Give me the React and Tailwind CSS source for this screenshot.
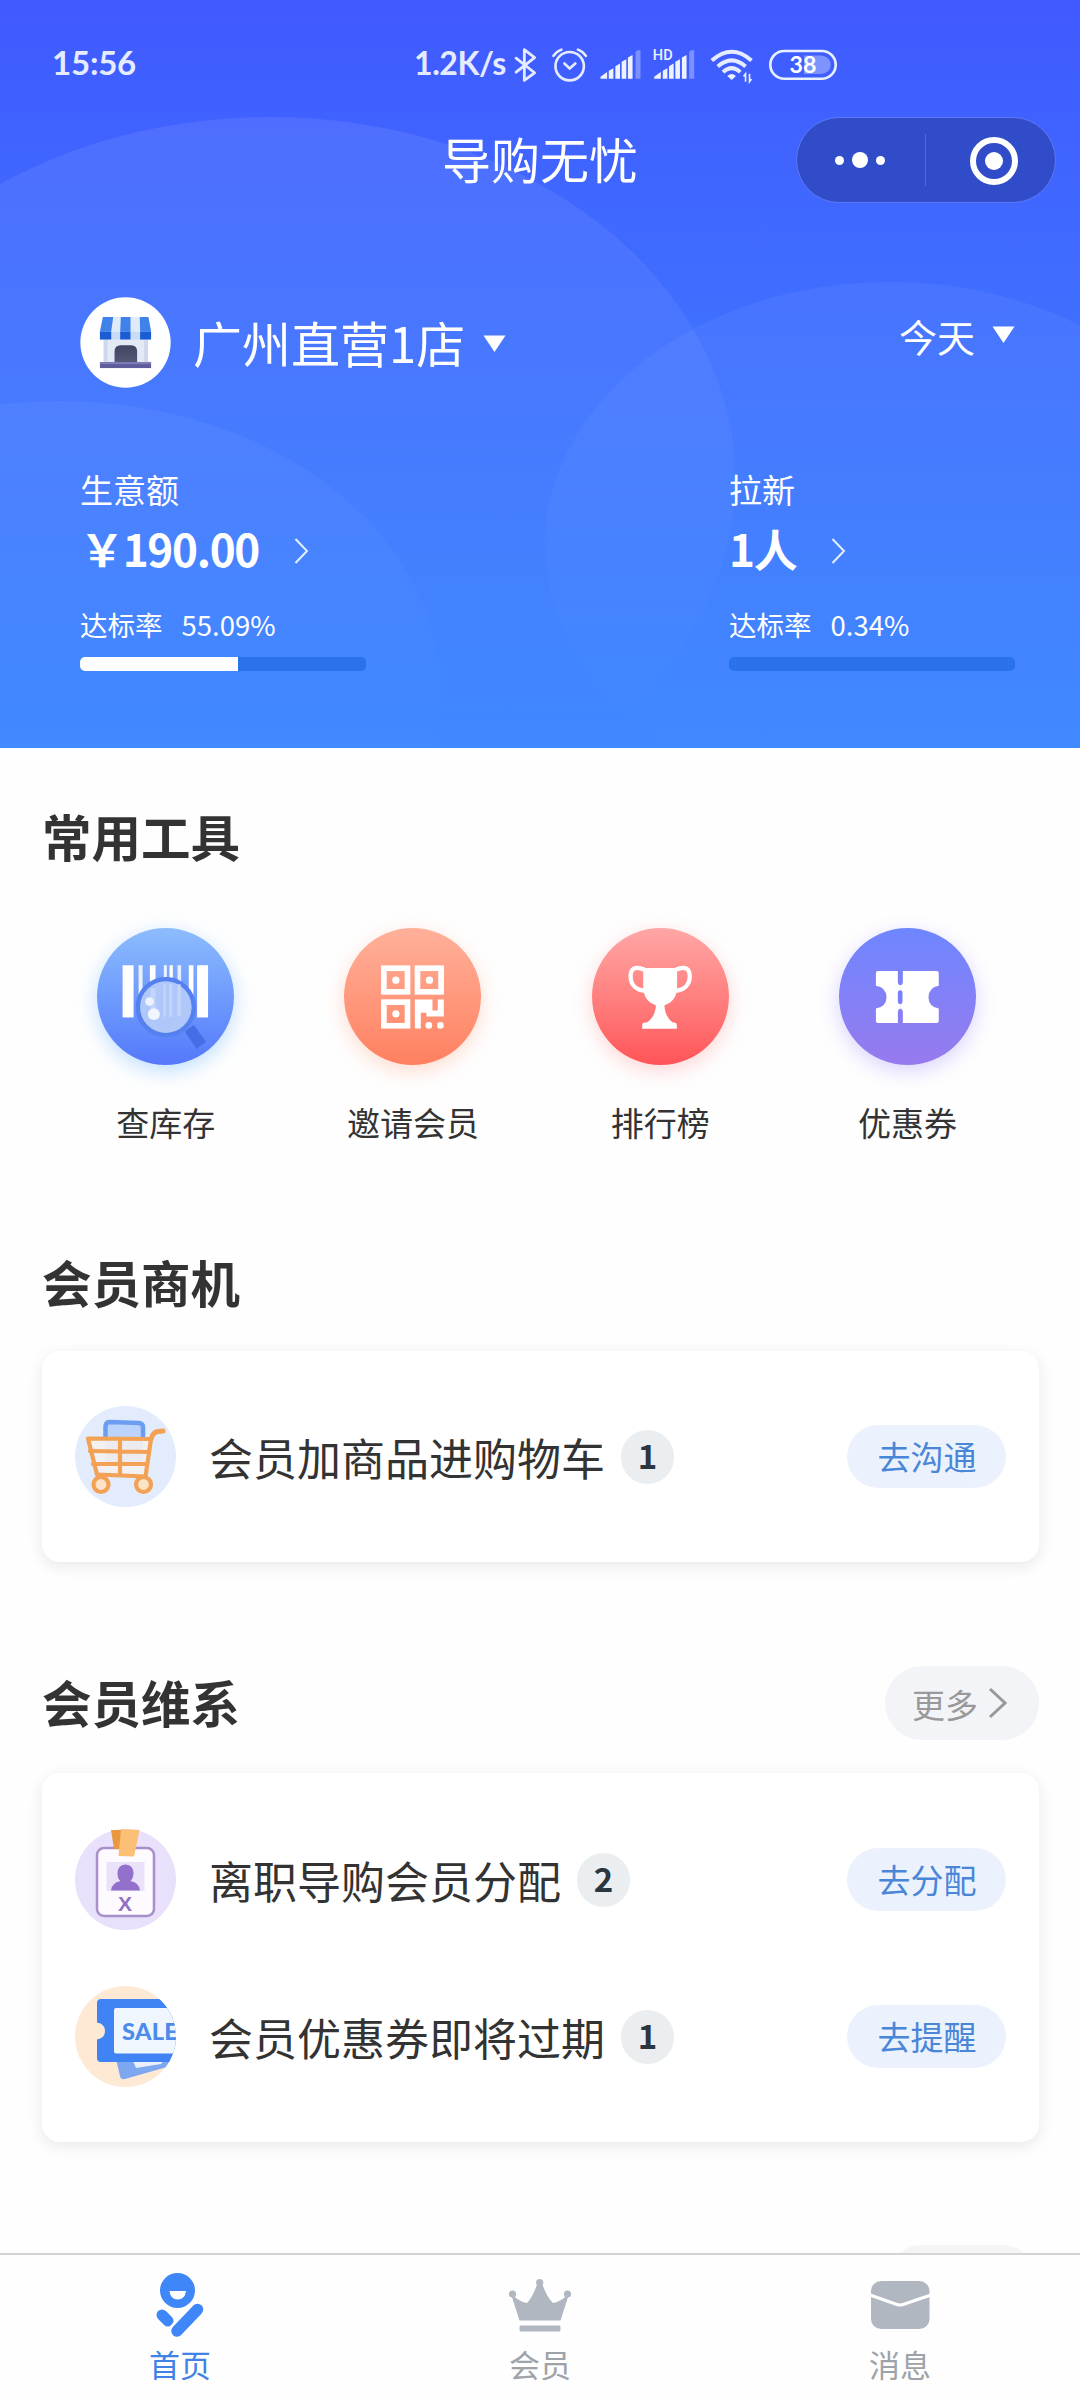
import clsx from 'clsx';

/* ---------- status bar icons ---------- */

function StatusIcons() {
  return (
    <div className="flex items-center">
      <svg className="ml-[7px] h-[38px] w-[25px]" viewBox="340 45 75 115" fill="none" stroke="#e6ecff" strokeWidth="8.5" strokeLinejoin="round" strokeLinecap="round">
        <path d="M349 82 L405 126 L374 149 V56 L405 80 L349 124" />
      </svg>
      <svg className="ml-3 h-[38px] w-[40px]" viewBox="450 45 120 115" fill="none" stroke="#e6ecff" strokeWidth="8" strokeLinecap="round">
        <circle cx="509" cy="106" r="43" />
        <path d="M493 98 L509 113 L526 98" />
        <path d="M460 75 Q468 62 484 56 M534 56 Q550 62 558 75" />
      </svg>
      <svg className="ml-2 h-[38px] w-[45px]" viewBox="595 45 135 115" fill="#eef2ff">
        <path d="M602 144 V138 L622 124 V144Z" />
        <path d="M627 144 V120 L641 112 V144Z" />
        <path d="M647 144 V106 L661 98 V144Z" />
        <path d="M666 144 V93 L680 85 V144Z" />
        <path d="M685 144 V80 L699 72 V144Z" />
        <path d="M708 144 V64 Q709 58 716 58 H723 V144Z" opacity="0.35" />
      </svg>
      <svg className="ml-2 h-[38px] w-[47px]" viewBox="755 45 141 115" fill="#eef2ff">
        <text x="760" y="86" fontSize="44" fontFamily="Roboto, sans-serif" fontWeight="500">HD</text>
        <path d="M764 144 V138 L784 124 V144Z" />
        <path d="M790 144 V120 L804 112 V144Z" />
        <path d="M809 144 V106 L823 98 V144Z" />
        <path d="M828 144 V93 L842 85 V144Z" />
        <path d="M848 144 V80 L862 72 V144Z" />
        <path d="M870 144 V64 Q871 58 878 58 H885 V144Z" opacity="0.35" />
      </svg>
      <svg className="ml-2.5 h-[38px] w-[47px]" viewBox="925 45 141 115" fill="none" stroke="#e6ecff" strokeWidth="12">
        <path d="M936 89 Q996 36 1056 89" />
        <path d="M954 107 Q996 70 1038 107" />
        <path d="M970 124 Q996 100 1022 124" />
        <path d="M983 136 Q996 124 1009 136 L996 148Z" fill="#eef2ff" stroke="none" />
        <path d="M1038 153 V129 L1032 137 M1050 129 V153 L1056 145" strokeWidth="5" />
      </svg>
      <svg className="ml-[13px] h-[38px] w-[70px]" viewBox="1104 45 210 115">
        <path d="M1212 74 H1262 Q1292 76 1293 102 Q1292 128 1262 130 H1212Z" fill="#7d94ff" />
        <rect x="1110" y="60" width="198" height="84" rx="42" fill="none" stroke="#e6f0ff" strokeWidth="8" />
        <text x="1209" y="127" textAnchor="middle" fontSize="70" fontFamily="Lato, sans-serif" fontWeight="700" fill="#fff">38</text>
      </svg>
    </div>
  );
}

/* ---------- header pieces ---------- */

function ShopIcon() {
  return (
    <svg className="h-[91px] w-[91px] shrink-0" viewBox="59 50 272 274">
      <defs>
        <linearGradient id="door" x1="0" y1="0" x2="0" y2="1">
          <stop offset="0" stopColor="#3f4462" />
          <stop offset="1" stopColor="#555a74" />
        </linearGradient>
      </defs>
      <circle cx="195" cy="187" r="136" fill="#fff" />
      <rect x="129" y="170" width="134" height="80" fill="#e4e9f6" />
      <rect x="129" y="176" width="12" height="72" fill="#d0d8ee" />
      <rect x="251" y="176" width="12" height="72" fill="#d0d8ee" />
      <path d="M127 110 H264 L272 154 H118Z" fill="#dfeafc" />
      <path d="M118 154 H272 V178 H118Z" fill="#c8dbf8" />
      <path d="M127 110 H158 L152 154 H118Z M181 110 H210 V154 H179Z M238 110 H264 L272 154 H239Z" fill="#3f82ea" />
      <path d="M118 154 H152 V178 H118Z M179 154 H210 V178 H179Z M239 154 H272 V178 H239Z" fill="#1a5cd4" />
      <path d="M162 250 V212 Q163 196 180 195 H212 Q229 196 230 212 V250Z" fill="url(#door)" />
      <rect x="118" y="246" width="154" height="18" fill="#5f5c9c" />
      <rect x="118" y="246" width="154" height="6" fill="#7f7cb8" />
    </svg>
  );
}

function Caret({ className }) {
  return (
    <svg className={clsx('h-[17px] w-[23px]', className)} viewBox="0 0 23 17" fill="#fff">
      <path d="M0.5 0.5 H22.5 L11.5 17Z" />
    </svg>
  );
}

function Stat({ label, value, rate, percent }) {
  return (
    <div className="w-[286px]">
      <div className="text-[33px] leading-[48px]">{label}</div>
      <div className="mt-[5px] flex h-[60px] items-center">
        <span className="text-[44px] leading-[60px] font-bold tracking-[-1.3px] whitespace-nowrap">{value}</span>
        <svg className="mt-1.5 ml-[35px] h-[26px] w-[15px]" viewBox="0 0 15 26" fill="none" stroke="#e3f0ff" strokeWidth="2">
          <path d="M1.5 1 L13 13 L1.5 25" />
        </svg>
      </div>
      <div className="mt-[26px] flex gap-[19px] text-[27.5px] leading-[40px]">
        <span>达标率</span>
        <span>{rate}</span>
      </div>
      <div className="mt-[13px] h-3.5 overflow-hidden rounded-[5px] bg-[#2a72ea]">
        <div className="h-full bg-white" style={{ width: `${percent}%` }}></div>
      </div>
    </div>
  );
}

function HeaderBackground() {
  return (
    <svg className="absolute inset-0 h-full w-full" viewBox="0 0 1080 748">
      <defs>
        <linearGradient id="bubble" x1="0" y1="0" x2="0" y2="1">
          <stop offset="0" stopColor="#fff" stopOpacity="0.08" />
          <stop offset="0.5" stopColor="#fff" stopOpacity="0.03" />
          <stop offset="0.85" stopColor="#fff" stopOpacity="0" />
        </linearGradient>
        <linearGradient id="bubbleSoft" x1="0" y1="0" x2="0" y2="1">
          <stop offset="0" stopColor="#fff" stopOpacity="0.05" />
          <stop offset="0.7" stopColor="#fff" stopOpacity="0.01" />
          <stop offset="1" stopColor="#fff" stopOpacity="0" />
        </linearGradient>
        <linearGradient id="bubbleLow" x1="0" y1="0" x2="0" y2="1">
          <stop offset="0" stopColor="#fff" stopOpacity="0.045" />
          <stop offset="0.5" stopColor="#fff" stopOpacity="0.008" />
          <stop offset="1" stopColor="#fff" stopOpacity="0" />
        </linearGradient>
      </defs>
      <ellipse cx="270" cy="479" rx="465" ry="362" fill="url(#bubble)" />
      <ellipse cx="890" cy="545" rx="345" ry="263" fill="url(#bubbleSoft)" />
      <ellipse cx="60" cy="690" rx="380" ry="289" fill="url(#bubbleLow)" />
    </svg>
  );
}

/* ---------- tool icons ---------- */

function BarcodeIcon() {
  return (
    <svg className="h-full w-full" viewBox="81 83 408 412">
      <g fill="#fff">
        <rect x="156" y="195" width="33" height="157" />
        <rect x="380" y="195" width="33" height="157" />
        <rect x="204" y="195" width="12" height="150" opacity="0.85" />
        <rect x="238" y="195" width="17" height="110" />
        <rect x="280" y="195" width="9" height="60" opacity="0.85" />
        <rect x="297" y="195" width="10" height="60" />
        <rect x="321" y="195" width="11" height="60" opacity="0.8" />
        <rect x="355" y="195" width="14" height="150" />
      </g>
      <path d="M343 394 L370 375 L407 425 L378 447Z" fill="#456de6" />
      <circle cx="286" cy="321" r="84" fill="#9cbcfc" stroke="#5581ef" strokeWidth="13" />
      <g fill="#d4e2ff" opacity="0.75">
        <rect x="240" y="265" width="15" height="80" />
        <rect x="279" y="252" width="7" height="98" />
        <rect x="296" y="252" width="9" height="98" />
        <rect x="321" y="252" width="10" height="95" />
      </g>
      <circle cx="286" cy="321" r="77" fill="#c3d2f6" opacity="0.5" />
      <circle cx="237" cy="304" r="13" fill="#eef3ff" />
      <circle cx="250" cy="342" r="18" fill="#f1f6ff" />
    </svg>
  );
}

function QrIcon() {
  return (
    <svg className="h-full w-full" viewBox="823 83 408 412">
      <g fill="none" stroke="#fff" strokeWidth="17">
        <rect x="941" y="204" width="71" height="71" />
        <rect x="1042" y="204" width="71" height="71" />
        <rect x="941" y="306" width="71" height="71" />
      </g>
      <g fill="#fff">
        <circle cx="977" cy="240" r="11" />
        <circle cx="1078" cy="240" r="11" />
        <circle cx="977" cy="341" r="11" />
        <path d="M1034 298 H1087 V331 H1103 V298 H1121 V349 H1069 V338 H1052 V385 H1034Z" />
        <circle cx="1076" cy="376" r="10" />
        <circle cx="1111" cy="376" r="10" />
      </g>
    </svg>
  );
}

function TrophyIcon() {
  return (
    <svg className="h-full w-full" viewBox="97 83 408 412">
      <g fill="none" stroke="#fff" strokeWidth="13">
        <path d="M252 208 C224 196 211 206 211 228 C211 252 226 270 256 272" />
        <path d="M348 208 C376 196 389 206 389 228 C389 252 374 270 344 272" />
      </g>
      <path
        d="M249 203 H351 V262 Q349 304 313 315 Q314 350 338 367 H344 Q350 368 350 374 V386 H246 V374 Q246 368 252 367 H260 Q286 350 287 315 Q251 304 249 262Z"
        fill="#fff"
      />
    </svg>
  );
}

function CouponIcon() {
  return (
    <svg className="h-full w-full" viewBox="839 83 408 412">
      <g fill="#fff">
        <path d="M954 212 H1014 V246 Q1015 255 1022 255 V325 Q1015 326 1014 334 V369 H954 Q948 369 948 363 V325 Q979 320 980 291 Q979 262 948 257 V218 Q948 212 954 212Z" />
        <path d="M1029 212 H1131 Q1137 212 1137 218 V257 Q1107 262 1106 291 Q1107 320 1137 325 V363 Q1137 369 1131 369 H1029 V334 Q1028 326 1021 325 V255 Q1028 255 1029 246Z" />
      </g>
      <rect x="1014" y="270" width="14" height="42" rx="7" fill="#7a80fb" />
    </svg>
  );
}

const tools = [
  { name: '查库存', icon: <BarcodeIcon />, bg: 'from-[#8dbcfd] to-[#5578fb] shadow-[0_6px_20px_rgba(90,170,255,0.38)]' },
  { name: '邀请会员', icon: <QrIcon />, bg: 'from-[#ffb09a] to-[#ff8060] shadow-[0_6px_20px_rgba(255,150,110,0.32)]' },
  { name: '排行榜', icon: <TrophyIcon />, bg: 'from-[#ffa6a6] to-[#ff5358] shadow-[0_6px_20px_rgba(255,110,110,0.28)]' },
  { name: '优惠券', icon: <CouponIcon />, bg: 'from-[#6d86ff] to-[#967aee] shadow-[0_6px_20px_rgba(140,120,255,0.32)]' },
];

/* ---------- list icons ---------- */

function CartIcon() {
  return (
    <svg className="h-[101px] w-[101px]" viewBox="0 0 101 101">
      <circle cx="50.5" cy="50.5" r="50.5" fill="#e3ecfd" />
      <path d="M30.5 60 V20 Q31 16 35 16 L64 17 Q68 17.5 68 21 V60Z" fill="#d3e0fb" />
      <path d="M30.5 33 V20 Q31 16 35 16 L64 17 Q68 17.5 68 21 V33" fill="#bcd4fb" stroke="#6d9df0" strokeWidth="4.5" />
      <path d="M14 33 H76 L70 69 H22Z" fill="#fdf3ea" opacity="0.6" />
      <g fill="none" stroke="#f2a155" strokeWidth="4.2" strokeLinecap="round" strokeLinejoin="round">
        <path d="M13 32.5 L76 33 L70.5 70.5 L22 68.5Z" />
        <path d="M15 45 L74 46 M18 58 L72 58 M45 33 V69" />
        <path d="M76 33 Q78 26 83 25.5 L88 25" strokeWidth="5" />
        <circle cx="26" cy="78.5" r="7.5" fill="#fde3c6" />
        <circle cx="68.5" cy="78.5" r="7.5" fill="#fde3c6" />
      </g>
    </svg>
  );
}

function BadgeIcon() {
  return (
    <svg className="h-[101px] w-[101px]" viewBox="0 0 101 101">
      <circle cx="50.5" cy="50.5" r="50.5" fill="#e9e0fb" />
      <rect x="22" y="19" width="57" height="68" rx="7" fill="#fdfbff" stroke="#a88fcc" strokeWidth="2.5" />
      <path d="M36 1 H47 L46 20 H39Z" fill="#e9983f" />
      <path d="M46 0 L64.5 1 L59 27.5 L43.5 27Z" fill="#fbbf76" />
      <rect x="31.5" y="33" width="38" height="29" fill="#e9e2f8" />
      <path d="M50.5 35.5 Q58.5 36 58.5 44.5 Q58 50 55.5 52 Q64.5 54 65 61.5 H36 Q36.5 54 45.5 52 Q42.5 50 42.5 44.5 Q42.5 36 50.5 35.5Z" fill="#9270cc" />
      <text x="50" y="81.5" textAnchor="middle" fontSize="21" fontFamily="Liberation Sans, sans-serif" fontWeight="700" fill="#9270c4">X</text>
    </svg>
  );
}

function SaleIcon() {
  return (
    <svg className="h-[101px] w-[101px]" viewBox="0 0 101 101">
      <defs>
        <clipPath id="saleRound">
          <circle cx="50.5" cy="50.5" r="50.5" />
        </clipPath>
      </defs>
      <g clipPath="url(#saleRound)">
        <rect width="101" height="101" fill="#fee9d5" />
        <path d="M41 73 H96 L92 81 L50 93 Q46 94 45 90Z" fill="#7da7ef" />
        <path d="M57 73 H90 L86 78 L61 82Z" fill="#e8f0fd" />
        <path d="M26 13 H101 V76 H26 Q22 76 22 72 V53.5 Q30 52 30 45 Q30 38 22 36.5 V17 Q22 13 26 13Z" fill="#4083f4" />
        <path d="M41 22 H101 V67.5 H41 Q39 67.5 39 65.5 V24 Q39 22 41 22Z" fill="#eff6fe" />
        <text x="47" y="53.5" fontSize="23.5" letterSpacing="0.3" fontFamily="Lato, sans-serif" fontWeight="900" fill="#4c8bea">SALE</text>
      </g>
    </svg>
  );
}

/* ---------- shared blocks ---------- */

function TaskRow({ icon, title, count, action, className }) {
  return (
    <div className={clsx('flex items-center px-[33px]', className)}>
      {icon}
      <span className="ml-[33px] text-[44px] leading-[60px] text-[#333]">{title}</span>
      <span className="ml-4 flex h-[54px] w-[53px] items-center justify-center rounded-full bg-[#eaeef0] pb-0.5 text-[33px] font-bold text-[#2c3640]">
        {count}
      </span>
      <button className="ml-auto h-[63px] w-[159px] rounded-full bg-[#ebf2fd] pl-px text-[33px] leading-[63px] text-[#4a86d8]">
        {action}
      </button>
    </div>
  );
}

function MorePill() {
  return (
    <div className="flex h-[74px] w-[154px] items-center rounded-full bg-[#f3f4f7] pl-[27px] text-[33px] text-[#999]">
      <span className="pt-1">更多</span>
      <svg className="ml-2.5 h-[32px] w-[19px]" viewBox="0 0 19 32" fill="none" stroke="#999" strokeWidth="3">
        <path d="M2 2 L17 16 L2 30" />
      </svg>
    </div>
  );
}

const cardClass = 'rounded-[18px] bg-white shadow-[0_4px_16px_rgba(0,0,0,0.09)]';
const headingClass = 'text-[49.5px] leading-[50px] font-bold text-[#333]';

/* ---------- bottom tabs ---------- */

function HomeTab() {
  return (
    <svg className="h-[70px] w-[60px]" viewBox="150 2270 60 70">
      <circle cx="177.5" cy="2290.5" r="17.5" fill="#3f86f8" />
      <path d="M169.5 2291 H186 Q185 2299.5 177.7 2299.5 Q170.5 2299.5 169.5 2291Z" fill="#fff" />
      <path d="M162 2315 L168 2321" stroke="#3f86f8" strokeWidth="11" strokeLinecap="round" />
      <path d="M197.500 2309.500 L177 2331" stroke="#fff" strokeWidth="17" strokeLinecap="round" />
      <path d="M197.5 2309.5 L177 2331" stroke="#3f86f8" strokeWidth="11.5" strokeLinecap="round" />
    </svg>
  );
}

function MemberTab() {
  return (
    <svg className="h-[70px] w-[70px]" viewBox="505 2270 70 70" fill="#b0b7c0">
      <circle cx="512.5" cy="2294" r="3.6" />
      <circle cx="539.7" cy="2282.5" r="3.6" />
      <circle cx="567.5" cy="2294" r="3.6" />
      <path d="M511 2294 Q519 2301.500 527 2303 Q533 2297 537.5 2283 H542 Q546.500 2297 553 2303 Q561 2301.500 569 2294 L560.5 2320.5 H519.5Z" />
      <rect x="519.5" y="2325.5" width="41" height="6" rx="1.5" />
    </svg>
  );
}

function MessageTab() {
  return (
    <svg className="h-[70px] w-[70px]" viewBox="865 2270 70 70">
      <rect x="871" y="2281" width="58.5" height="48" rx="10" fill="#b0b7c0" />
      <path d="M870 2295 L897 2304.5 Q900 2305.5 903 2304.5 L931 2295" fill="none" stroke="#fff" strokeWidth="3.2" />
    </svg>
  );
}

const tabs = [
  { name: '首页', icon: <HomeTab />, color: 'text-[#4182e6]' },
  { name: '会员', icon: <MemberTab />, color: 'text-[#9da3a9]' },
  { name: '消息', icon: <MessageTab />, color: 'text-[#9da3a9]' },
];

function App() {
  return (
    <div className="flex h-[2400px] w-[1080px] flex-col overflow-hidden bg-[#fefefe] font-['Noto_Sans_CJK_SC',sans-serif]">
      {/* Header */}
      <header className="relative h-[748px] shrink-0 bg-gradient-to-b from-[#4059ff] to-[#4089ff] text-white">
        <HeaderBackground />
        <div className="relative">
          {/* Status bar */}
          <div className="flex h-[117px] items-center pt-[13px] pl-[52px] font-['Lato',sans-serif] font-bold text-[#e6ecff]">
            <span className="w-[362px] pb-1 text-[33px] tracking-[-0.2px]">15:56</span>
            <span className="w-[92px] pb-1 text-[32px] tracking-[-0.4px] whitespace-nowrap">1.2K/s</span>
            <StatusIcons />
          </div>

          {/* Title bar */}
          <div className="grid h-[85px] grid-cols-[1fr_auto_1fr] items-center px-6">
            <div></div>
            <h1 className="pb-[5px] text-[49px] leading-[60px]">导购无忧</h1>
            <div className="flex h-[86px] w-[260px] items-center justify-self-end rounded-full border border-[#5d78f4] bg-[#314cc9]">
              <div className="flex w-[128px] items-center justify-center gap-2 pr-0.5">
                <span className="h-[9px] w-[9px] rounded-full bg-white"></span>
                <span className="h-4 w-4 rounded-full bg-white"></span>
                <span className="h-[9px] w-[9px] rounded-full bg-white"></span>
              </div>
              <div className="h-[52px] w-px bg-[#5068d8]"></div>
              <div className="flex flex-1 items-center justify-center pt-0.5 pl-1.5">
                <div className="flex h-12 w-12 items-center justify-center rounded-full border-[6px] border-white">
                  <span className="h-[18px] w-[18px] rounded-full bg-white"></span>
                </div>
              </div>
            </div>
          </div>

          {/* Store picker */}
          <div className="mt-[95px] flex h-[91px] items-center pr-[65px] pl-20">
            <ShopIcon />
            <span className="ml-[22px] pb-0.5 text-[49px] leading-[60px]">广州直营1店</span>
            <Caret className="mt-0.5 ml-[18px]" />
            <div className="mb-3.5 ml-auto flex items-center">
              <span className="text-[38px] leading-[50px]">今天</span>
              <Caret className="mb-0.5 ml-[17px]" />
            </div>
          </div>

          {/* Stats */}
          <div className="mt-[77px] flex justify-between pr-[65px] pl-20">
            <Stat label="生意额" value="￥190.00" rate="55.09%" percent={55.09} />
            <Stat label="拉新" value="1人" rate="0.34%" percent={0} />
          </div>
        </div>
      </header>

      {/* Content */}
      <main className="min-h-0 flex-1 overflow-hidden pt-[63px] pr-[41px] pl-[42px]">
        <h2 className={headingClass}>常用工具</h2>
        <div className="mt-[67px] grid grid-cols-4 pr-[8px]">
          {tools.map((tool) => (
            <div key={tool.name} className="flex flex-col items-center">
              <div className={clsx('h-[137px] w-[137px] rounded-full bg-gradient-to-b', tool.bg)}>{tool.icon}</div>
              <span className="mt-[33px] text-[33px] leading-[48px] text-[#333]">{tool.name}</span>
            </div>
          ))}
        </div>

        <h2 className={clsx(headingClass, 'mt-[111px]')}>会员商机</h2>
        <div className={clsx(cardClass, 'mt-[44px]')}>
          <TaskRow className="h-[211px]" icon={<CartIcon />} title="会员加商品进购物车" count={1} action="去沟通" />
        </div>

        <div className="mt-[104px] flex h-[74px] items-center justify-between">
          <h2 className={clsx(headingClass, 'mb-0.5')}>会员维系</h2>
          <MorePill />
        </div>
        <div className={clsx(cardClass, 'mt-[33px] h-[369px] pt-[28px]')}>
          <TaskRow className="h-[157px]" icon={<BadgeIcon />} title="离职导购会员分配" count={2} action="去分配" />
          <TaskRow className="h-[157px]" icon={<SaleIcon />} title="会员优惠券即将过期" count={1} action="去提醒" />
        </div>

        {/* next section's pill, mostly below the fold */}
        <div className="mt-[103px] ml-auto h-[74px] w-[154px] rounded-full bg-[#f5f5f6]"></div>
      </main>

      {/* Bottom tabs */}
      <nav className="grid h-[147px] shrink-0 grid-cols-3 border-t-2 border-[#d4d4d6] bg-[#fefefe] pt-[15px]">
        {tabs.map((tab) => (
          <div key={tab.name} className="flex flex-col items-center">
            {tab.icon}
            <span className={clsx('mt-0.5 text-[31px] leading-[44px]', tab.color)}>{tab.name}</span>
          </div>
        ))}
      </nav>
    </div>
  );
}

export default App;
